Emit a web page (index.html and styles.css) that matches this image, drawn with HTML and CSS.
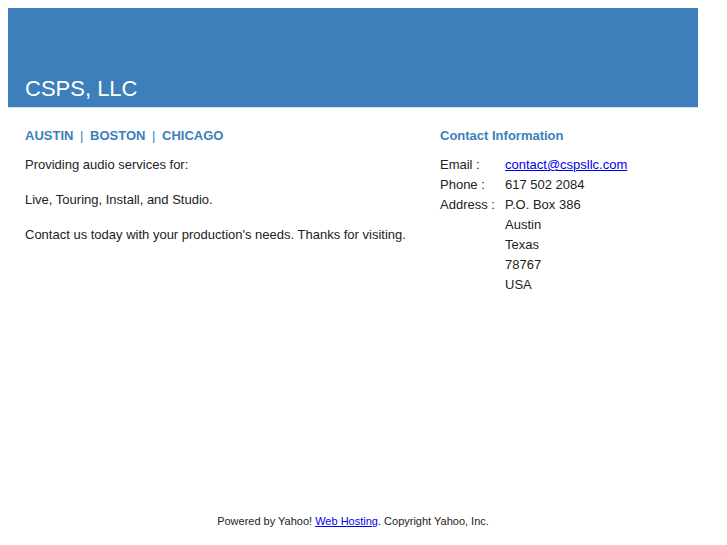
FILE: index.html
```html
<!DOCTYPE html>
<html lang="en">

<head>
    <meta charset="UTF-8">
    <title>CSPS, LLC</title>
    <link rel="stylesheet" href="styles.css">
</head>

<body>
    <div class="page">
        <div class="header">
            <h1>CSPS, LLC</h1>
        </div>
        <div class="content">
            <div class="main">
                <div class="cities">AUSTIN <span class="sep">|</span> BOSTON <span class="sep">|</span> CHICAGO</div>
                <p>Providing audio services for:</p>
                <p>Live, Touring, Install, and Studio.</p>
                <p>Contact us today with your production's needs. Thanks for visiting.</p>
            </div>
            <div class="side">
                <h2>Contact Information</h2>
                <div class="info">
                    <span class="label">Email :</span>
                    <span><a href="#">contact@cspsllc.com</a></span>
                    <span class="label">Phone :</span>
                    <span>617 502 2084</span>
                    <span class="label">Address :</span>
                    <span>P.O. Box 386</span>
                    <span></span>
                    <span>Austin</span>
                    <span></span>
                    <span>Texas</span>
                    <span></span>
                    <span>78767</span>
                    <span></span>
                    <span>USA</span>
                </div>
            </div>
        </div>
        <div class="footer">
            Powered by Yahoo! <a href="#">Web Hosting</a>. Copyright Yahoo, Inc.
        </div>
    </div>
</body>

</html>
```

FILE: styles.css
```css
body {
    margin: 8px;
    font-family: "Liberation Sans", Arial, sans-serif;
    color: #222;
    background-color: white;
}

.page {
    width: 690px;
    height: 529px;
    display: flex;
    flex-direction: column;
}

.header {
    background-color: #3c7fba;
    height: 99px;
    border-bottom: 1px solid #cfe0ee;
    display: flex;
    align-items: flex-end;
}

h1 {
    margin: 0 0 5px 17px;
    font-size: 22px;
    font-weight: normal;
    color: white;
}

.content {
    display: flex;
    padding: 0 17px;
}

.main {
    width: 415px;
}

.cities {
    margin-top: 20px;
    font-size: 13px;
    font-weight: bold;
    color: #3c7fba;
}

.sep {
    font-weight: normal;
    padding: 0 3px;
}

p {
    font-size: 13px;
    margin: 15px 0 0 0;
    line-height: 20px;
}

.cities + p {
    margin-top: 12px;
}

h2 {
    margin: 20px 0 0 0;
    font-size: 13px;
    font-weight: bold;
    color: #3c7fba;
}

.info {
    margin-top: 12px;
    display: grid;
    grid-template-columns: 65px auto;
    font-size: 13px;
    line-height: 20px;
}

a {
    color: #0000ee;
}

.footer {
    margin-top: auto;
    text-align: center;
    font-size: 11px;
    padding-bottom: 10px;
}
```
